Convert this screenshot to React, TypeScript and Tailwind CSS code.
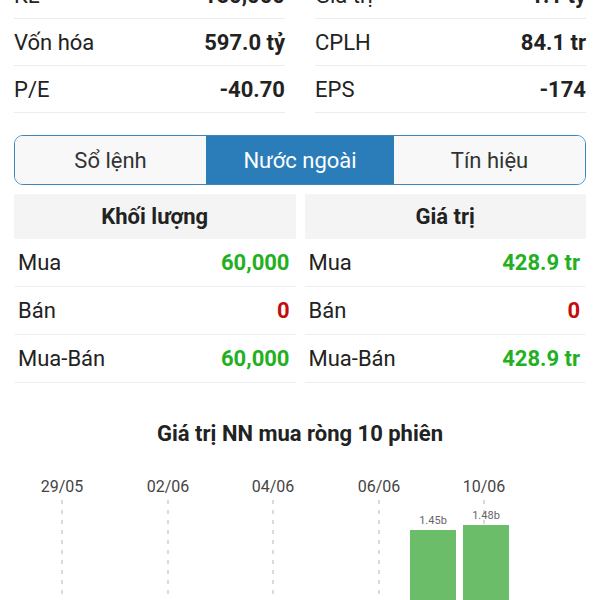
import React from 'react';

type Stat = { label: string; value: string };

const leftStats: Stat[] = [
  { label: 'KL', value: '150,000' },
  { label: 'Vốn hóa', value: '597.0 tỷ' },
  { label: 'P/E', value: '-40.70' },
];

const rightStats: Stat[] = [
  { label: 'Giá trị', value: '1.1 tỷ' },
  { label: 'CPLH', value: '84.1 tr' },
  { label: 'EPS', value: '-174' },
];

type Flow = { label: string; value: string; tone: 'up' | 'down' };

const volumeRows: Flow[] = [
  { label: 'Mua', value: '60,000', tone: 'up' },
  { label: 'Bán', value: '0', tone: 'down' },
  { label: 'Mua-Bán', value: '60,000', tone: 'up' },
];

const valueRows: Flow[] = [
  { label: 'Mua', value: '428.9 tr', tone: 'up' },
  { label: 'Bán', value: '0', tone: 'down' },
  { label: 'Mua-Bán', value: '428.9 tr', tone: 'up' },
];

const StatColumn = ({ rows }: { rows: Stat[] }) => (
  <div className="flex-1 flex flex-col">
    {rows.map(r => (
      <div key={r.label} className="h-[47px] flex items-center justify-between border-b border-[#ececec]">
        <span className="text-[#222]">{r.label}</span>
        <span className="font-bold text-[#222]">{r.value}</span>
      </div>
    ))}
  </div>
);

const FlowTable = ({ title, rows }: { title: string; rows: Flow[] }) => (
  <div className="flex-1 flex flex-col">
    <div className="h-[45px] bg-[#f4f4f4] flex items-center justify-center font-bold text-[#222]">
      {title}
    </div>
    {rows.map(r => (
      <div key={r.label} className="h-[48px] flex items-center justify-between pl-1 pr-[6px] border-b border-[#efefef]">
        <span className="text-[#222]">{r.label}</span>
        <span className={r.tone === 'up' ? 'font-bold text-[#22b022]' : 'font-bold text-[#c40c0c]'}>{r.value}</span>
      </div>
    ))}
  </div>
);

const dates = [
  { x: 62, label: '29/05' },
  { x: 168, label: '02/06' },
  { x: 273, label: '04/06' },
  { x: 379, label: '06/06' },
  { x: 484, label: '10/06' },
];

const NetBuyChart = () => (
  <svg width="600" height="140" viewBox="0 0 600 140" className="block">
    {dates.map(d => (
      <g key={d.label}>
        <text x={d.x} y="29" textAnchor="middle" fontSize="16" fill="#444" fontFamily="Roboto, sans-serif">
          {d.label}
        </text>
        <line x1={d.x} y1="37" x2={d.x} y2="140" stroke="#b5b5b5" strokeWidth="1" strokeDasharray="4 6" />
      </g>
    ))}
    <rect x="410" y="67" width="46" height="73" fill="#6cbd69" />
    <rect x="463" y="62" width="46" height="78" fill="#6cbd69" />
    <text x="433" y="61" textAnchor="middle" fontSize="11" fill="#666" fontFamily="Roboto, sans-serif">1.45b</text>
    <text x="486" y="56" textAnchor="middle" fontSize="11" fill="#666" fontFamily="Roboto, sans-serif">1.48b</text>
  </svg>
);

export default function App() {
  return (
    <div className="w-[600px] h-[600px] overflow-hidden bg-white text-[22px] font-['Roboto',sans-serif]">
      <div className="-mt-[28px] px-[14px] flex gap-[30px]">
        <StatColumn rows={leftStats} />
        <StatColumn rows={rightStats} />
      </div>

      <div className="mt-[22px] mx-[14px] h-[50px] flex rounded-[9px] border-[1.5px] border-[#3a86bf] overflow-hidden">
        <div className="w-[191px] flex items-center justify-center bg-[#f8f8f8] text-[#333]">Sổ lệnh</div>
        <div className="w-[188px] flex items-center justify-center bg-[#2a7db9] text-white">Nước ngoài</div>
        <div className="flex-1 flex items-center justify-center bg-[#f8f8f8] text-[#333]">Tín hiệu</div>
      </div>

      <div className="mt-[9px] mx-[14px] flex gap-[9px]">
        <FlowTable title="Khối lượng" rows={volumeRows} />
        <FlowTable title="Giá trị" rows={valueRows} />
      </div>

      <div className="mt-[36px] text-center font-bold text-[22px] text-[#222] leading-[30px]">
        Giá trị NN mua ròng 10 phiên
      </div>
      <div className="mt-[14px]">
        <NetBuyChart />
      </div>
    </div>
  );
}
